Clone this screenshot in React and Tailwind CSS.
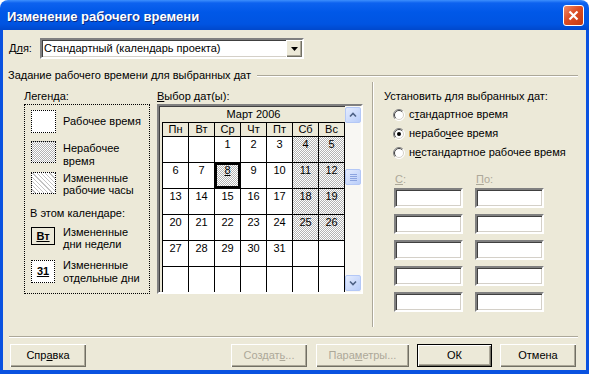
import React from 'react';

const sunken =
  'border-2 border-t-[#808080] border-l-[#808080] border-b-white border-r-white shadow-[inset_1px_1px_0_#404040,inset_-1px_-1px_0_#d4d0c8]';
const raised =
  'bg-[#ece9d8] shadow-[inset_1px_1px_0_#ffffff,inset_-1px_-1px_0_#716f64,inset_-2px_-2px_0_#aca899]';
const dither = 'bg-[repeating-conic-gradient(#b4b4b4_0_25%,#ffffff_0_50%)] bg-[length:2px_2px]';
const hatch = 'bg-[repeating-linear-gradient(45deg,#ffffff_0_2px,#c4c4c4_2px_3px)]';

const weeks = [
  [null, null, 1, 2, 3, 4, 5],
  [6, 7, 8, 9, 10, 11, 12],
  [13, 14, 15, 16, 17, 18, 19],
  [20, 21, 22, 23, 24, 25, 26],
  [27, 28, 29, 30, 31, null, null],
  [null, null, null, null, null, null, null],
];
const dayNames = ['Пн', 'Вт', 'Ср', 'Чт', 'Пт', 'Сб', 'Вс'];

function Radio({ checked }) {
  return (
    <svg width="12" height="12" viewBox="0 0 12 12" className="shrink-0">
      <circle cx="6" cy="6" r="5.5" fill="#ffffff" />
      <path d="M9.9 2.1 A5.5 5.5 0 0 0 2.1 9.9" stroke="#808080" fill="none" />
      <path d="M9.2 2.8 A4.5 4.5 0 0 0 2.8 9.2" stroke="#404040" fill="none" />
      <path d="M2.1 9.9 A5.5 5.5 0 0 0 9.9 2.1" stroke="#ffffff" fill="none" />
      <path d="M2.8 9.2 A4.5 4.5 0 0 0 9.2 2.8" stroke="#d4d0c8" fill="none" />
      {checked && <circle cx="6" cy="6" r="2" fill="#000000" />}
    </svg>
  );
}

function ScrollBtn({ dir }) {
  return (
    <div className="w-[16px] h-[16px] rounded-[2px] border border-[#b4c8f6] bg-linear-to-br from-[#e4ecfe] to-[#b9cdf9] flex items-center justify-center">
      <svg width="8" height="6" viewBox="0 0 8 6">
        {dir === 'up' ? (
          <path d="M1 4.5 L4 1.5 L7 4.5" stroke="#4d6185" strokeWidth="1.6" fill="none" />
        ) : (
          <path d="M1 1.5 L4 4.5 L7 1.5" stroke="#4d6185" strokeWidth="1.6" fill="none" />
        )}
      </svg>
    </div>
  );
}

function Button({ children, className, disabled, isDefault }) {
  return (
    <div
      className={`h-[23px] flex items-center justify-center ${raised} ${className} ${
        disabled ? 'text-[#aca899]' : 'text-black'
      } ${isDefault ? 'border border-black' : ''}`}
    >
      {children}
    </div>
  );
}

export default function App() {
  return (
    <div className="w-[589px] h-[374px] flex flex-col font-['Liberation_Sans',Arial,sans-serif] text-[11px] text-black select-none overflow-hidden">
      {/* title bar */}
      <div className="h-[30px] shrink-0 flex items-center pl-[7px] pr-[5px] rounded-t-[8px] bg-[linear-gradient(to_bottom,#3d8ffd_0px,#0d62ef_3px,#0058e8_12px,#0054e2_24px,#0048cc_30px)]">
        <span className="flex-1 mt-[2px] text-white font-bold text-[13px] leading-none [text-shadow:1px_1px_0_#0a2a80]">
          Изменение рабочего времени
        </span>
        <div className="w-[21px] h-[21px] rounded-[3px] border border-white bg-[linear-gradient(135deg,#ee8a68,#dc4d24_45%,#c23a12)] flex items-center justify-center">
          <svg width="11" height="11" viewBox="0 0 11 11">
            <path d="M1.5 1.5 L9.5 9.5 M9.5 1.5 L1.5 9.5" stroke="#ffffff" strokeWidth="2.2" />
          </svg>
        </div>
      </div>

      {/* window body */}
      <div className="flex-1 flex flex-col bg-[#ece9d8] border-x-[3px] border-b-[4px] border-[#0a52e0]">
        {/* Для */}
        <div className="flex items-center mt-[8px] h-[21px] pl-[6px]">
          <span className="w-[31px]">
            Д<u>л</u>я:
          </span>
          <div className={`w-[264px] h-[21px] bg-white flex ${sunken}`}>
            <span className="flex-1 pl-[2px] leading-[17px]">Стандартный (календарь проекта)</span>
            <div className={`w-[16px] h-[17px] flex items-center justify-center ${raised}`}>
              <svg width="7" height="4" viewBox="0 0 7 4">
                <path d="M0 0 H7 L3.5 4 Z" fill="#000000" />
              </svg>
            </div>
          </div>
        </div>

        {/* group title */}
        <div className="flex items-center mt-[10px] h-[13px] pl-[5px] pr-[8px]">
          <span className="leading-[13px]">Задание рабочего времени для выбранных дат</span>
          <div className="flex-1 ml-[6px] h-[2px] border-t border-b border-t-[#aca899] border-b-white" />
        </div>

        {/* main area */}
        <div className="flex h-[245px] pl-[21px]">
          {/* legend */}
          <div className="w-[126px] pt-[7px] flex flex-col">
            <div className="h-[15px] leading-[14px]">Легенда:</div>
            <div className="h-[190px] border border-dotted border-black pl-[6px] pt-[5px] flex flex-col">
              <div className="flex gap-[7px] h-[23px]">
                <div className="w-[25px] h-[23px] border border-dotted border-black bg-white" />
                <div className="leading-[13px] self-center">Рабочее время</div>
              </div>
              <div className="flex gap-[7px] mt-[8px] h-[22px]">
                <div className={`w-[25px] h-[22px] border border-dotted border-black ${dither}`} />
                <div className="leading-[13px] pt-[1px]">
                  Нерабочее
                  <br />
                  время
                </div>
              </div>
              <div className="flex gap-[7px] mt-[9px] h-[22px]">
                <div className={`w-[25px] h-[22px] border border-dotted border-black ${hatch}`} />
                <div className="leading-[12px]">
                  Измененные
                  <br />
                  рабочие часы
                </div>
              </div>
              <div className="mt-[12px] -ml-[1px] h-[14px] leading-[14px]">В этом календаре:</div>
              <div className="flex gap-[8px] mt-[6px] h-[24px]">
                <div className="w-[24px] h-[18px] mt-[1px] border border-black flex items-center justify-center font-bold">
                  <u>Вт</u>
                </div>
                <div className="leading-[12px]">
                  Измененные
                  <br />
                  дни недели
                </div>
              </div>
              <div className="flex gap-[8px] mt-[9px] h-[26px]">
                <div className="w-[24px] h-[23px] mt-[1px] border border-dotted border-black bg-white flex items-center justify-center font-bold">
                  <u>31</u>
                </div>
                <div className="leading-[13px]">
                  Измененные
                  <br />
                  отдельные дни
                </div>
              </div>
            </div>
          </div>

          {/* calendar */}
          <div className="w-[206px] ml-[7px] pt-[7px] flex flex-col">
            <div className="h-[15px] leading-[14px]">
              <u>В</u>ыбор дат(ы):
            </div>
            <div className={`h-[190px] bg-[#ece9d8] flex ${sunken}`}>
              <div className="w-[186px] pl-[3px] flex flex-col overflow-hidden">
                <div className="h-[16px] w-[183px] text-center leading-[16px]">Март 2006</div>
                <div className="w-[183px] border-l border-t border-black">
                  <div className="flex">
                    {dayNames.map((d) => (
                      <div
                        key={d}
                        className="w-[26px] h-[14px] border-r border-b border-black text-center leading-[13px]"
                      >
                        {d}
                      </div>
                    ))}
                  </div>
                  {weeks.map((w, ri) => (
                    <div key={ri} className="flex">
                      {w.map((d, ci) => {
                        const off = (ci >= 5 && ri < 4) || d === 8;
                        const sel = d === 8;
                        return (
                          <div
                            key={ci}
                            className={`w-[26px] h-[26px] border-r border-b border-black text-center leading-[13px] pt-[1px] ${
                              off ? dither : 'bg-white'
                            } ${sel ? 'shadow-[inset_0_0_0_2px_#000000]' : ''}`}
                          >
                            {sel ? <u>{d}</u> : d}
                          </div>
                        );
                      })}
                    </div>
                  ))}
                </div>
              </div>
              <div className="w-[16px] flex flex-col pt-[1px] pb-[1px] bg-[#f8f7f3]">
                <ScrollBtn dir="up" />
                <div className="flex-1 flex flex-col">
                  <div className="mt-[46px] w-[16px] h-[16px] rounded-[2px] border border-[#b4c8f6] bg-linear-to-br from-[#e4ecfe] to-[#b9cdf9] flex flex-col items-center justify-center gap-[1px]">
                    <div className="w-[7px] h-[1px] bg-[#8ca4e0]" />
                    <div className="w-[7px] h-[1px] bg-[#8ca4e0]" />
                    <div className="w-[7px] h-[1px] bg-[#8ca4e0]" />
                    <div className="w-[7px] h-[1px] bg-[#8ca4e0]" />
                  </div>
                </div>
                <ScrollBtn dir="down" />
              </div>
            </div>
          </div>

          {/* separator */}
          <div className="ml-[9px] w-[2px] h-full border-l border-r border-l-[#aca899] border-r-white" />

          {/* right panel */}
          <div className="flex-1 pl-[10px] pt-[7px]">
            <div className="h-[15px] leading-[14px]">Установить для выбранных дат:</div>
            <div className="mt-[1px] flex flex-col">
              <div className="h-[19px] flex items-center pl-[9px] gap-[4px]">
                <Radio />
                <span>
                  с<u>т</u>андартное время
                </span>
              </div>
              <div className="h-[19px] flex items-center pl-[9px] gap-[4px]">
                <Radio checked />
                <span>
                  нерабо<u>ч</u>ее время
                </span>
              </div>
              <div className="h-[19px] flex items-center pl-[9px] gap-[4px]">
                <Radio />
                <span>
                  н<u>е</u>стандартное рабочее время
                </span>
              </div>
            </div>
            <div className="mt-[10px] ml-[10px] flex gap-[12px]">
              {['С', 'П'].map((l) => (
                <div key={l} className="w-[69px] flex flex-col">
                  <div className="h-[14px] mb-[2px] pl-[1px] leading-[14px] text-[#aca899]">
                    <u>{l}</u>
                    {l === 'П' ? 'о:' : ':'}
                  </div>
                  <div className="flex flex-col gap-[6px]">
                    {[0, 1, 2, 3, 4].map((i) => (
                      <div key={i} className={`h-[20px] bg-white ${sunken}`} />
                    ))}
                  </div>
                </div>
              ))}
            </div>
          </div>
        </div>

        {/* bottom separator */}
        <div className="mt-[9px] ml-[6px] mr-[8px] h-[2px] border-t border-b border-t-[#aca899] border-b-white" />

        {/* buttons */}
        <div className="flex mt-[6px] pl-[7px] pr-[10px]">
          <Button className="w-[76px]">
            Спр<u>а</u>вка
          </Button>
          <Button className="w-[76px] ml-auto" disabled>
            Создат<u>ь</u>...
          </Button>
          <Button className="w-[93px] ml-[9px]" disabled>
            Пара<u>м</u>етры...
          </Button>
          <Button className="w-[75px] ml-[8px]" isDefault>
            ОК
          </Button>
          <Button className="w-[76px] ml-[8px]">Отмена</Button>
        </div>
      </div>
    </div>
  );
}
